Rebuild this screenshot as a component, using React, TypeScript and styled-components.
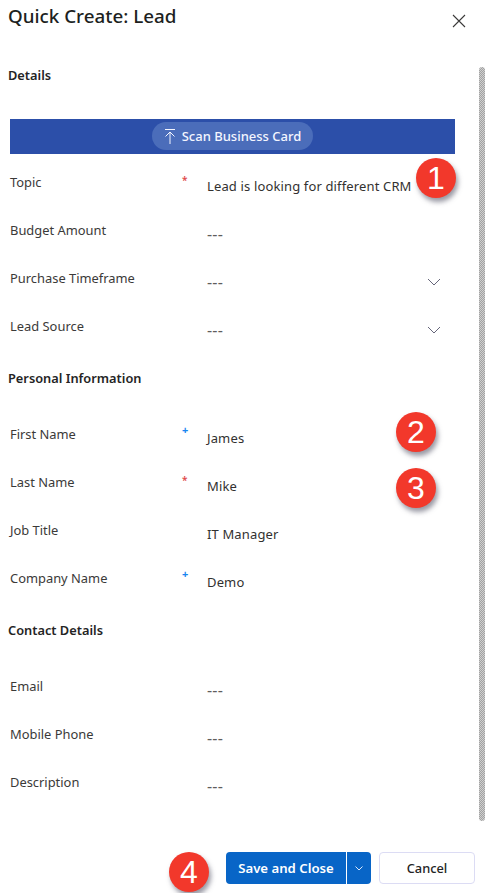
import React from "react";
import styled, { createGlobalStyle } from "styled-components";

const Global = createGlobalStyle`
  html, body { margin: 0; padding: 0; background: #fff; }
  * { box-sizing: border-box; }
  body { font-family: "Noto Sans", "Open Sans", Arial, sans-serif; color: #323130; overflow: hidden; }
`;

const Page = styled.div`
  width: 487px;
  height: 893px;
  display: flex;
  flex-direction: column;
  position: relative;
  overflow: hidden;
`;

const Header = styled.header`
  height: 60px;
  display: flex;
  justify-content: space-between;
  align-items: flex-start;
  padding: 0 21px 0 8px;
`;

const Title = styled.h1`
  margin: 0;
  font-size: 18.8px;
  line-height: 32px;
  font-weight: 500;
  color: #201f1e;
`;

const CloseButton = styled.button`
  border: 0;
  background: none;
  padding: 0;
  margin-top: 14px;
  width: 14px;
  height: 14px;
  display: block;
  color: #3b3a39;
`;

const Body = styled.div`
  height: 792px;
  display: flex;
  justify-content: space-between;
`;

const Form = styled.main`
  width: 465px;
`;

const Scrollbar = styled.div`
  width: 6px;
  height: 754px;
  margin: 7px 2px 0 0;
  border-radius: 3px;
  background: conic-gradient(#a2a2a2 25%, #cfcfcf 0 50%, #a2a2a2 0 75%, #cfcfcf 0) 0 0 / 2px 2px;
`;

const SectionTitle = styled.h2<{ $top?: number; $bottom?: number }>`
  margin: ${(p) => p.$top ?? 0}px 0 ${(p) => p.$bottom ?? 17}px 8px;
  height: 30px;
  font-size: 12.8px;
  line-height: 30px;
  font-weight: 600;
  color: #242424;
`;

const Band = styled.div`
  height: 35px;
  margin: 29px 0 4px 10px;
  width: 445px;
  background: #2c4fa9;
  display: flex;
  justify-content: center;
  padding-top: 3px;
`;

const ScanPill = styled.button`
  width: 161px;
  height: 28px;
  border: 0;
  border-radius: 14px;
  background: #4b6dba;
  color: #f4f6ff;
  display: flex;
  align-items: center;
  justify-content: center;
  gap: 6px;
  font: 500 13px "Noto Sans", sans-serif;
  padding: 0;
`;

const Row = styled.div`
  height: 48px;
  padding-left: 10px;
  display: grid;
  grid-template-columns: 172px 25px 1fr;
  position: relative;
`;

const Label = styled.label`
  font-size: 12.9px;
  line-height: 48px;
  color: #3b3a39;
`;

const Required = styled.span<{ $kind: "required" | "recommended" }>`
  display: block;
  font-size: ${(p) => (p.$kind === "required" ? 10 : 11)}px;
  line-height: ${(p) => (p.$kind === "required" ? 44 : 40)}px;
  font-weight: ${(p) => (p.$kind === "required" ? 600 : 700)};
  color: ${(p) => (p.$kind === "required" ? "#e0484a" : "#1a86f0")};
`;

const Value = styled.div<{ $empty?: boolean }>`
  font-size: ${(p) => (p.$empty ? 16 : 13)}px;
  line-height: 56px;
  letter-spacing: ${(p) => (p.$empty ? "0.2px" : "0.14px")};
  color: ${(p) => (p.$empty ? "#605e5c" : "#323130")};
  white-space: nowrap;
`;

const Chevron = styled.svg`
  position: absolute;
  left: 427px;
  top: 24px;
  width: 14px;
  height: 9px;
`;

const Badge = styled.div<{ $x: number; $y: number }>`
  position: absolute;
  left: ${(p) => p.$x}px;
  top: ${(p) => p.$y}px;
  width: 40px;
  height: 40px;
  border-radius: 50%;
  background: #f2382b;
  color: #fff;
  font: 400 32px/40px "Liberation Sans", Arial, sans-serif;
  text-align: center;
  box-shadow: 2px 4px 5px rgba(70, 70, 90, 0.55);
`;

const Footer = styled.footer`
  height: 41px;
  display: flex;
  justify-content: flex-end;
  align-items: flex-start;
  gap: 8px;
  padding-right: 12px;
`;

const SplitButton = styled.div`
  display: flex;
  width: 145px;
  height: 32px;
  border-radius: 4px;
  overflow: hidden;
  background: #0865c7;
`;

const SaveButton = styled.button`
  width: 120px;
  border: 0;
  background: none;
  color: #fff;
  padding: 0;
  font: 600 13.2px "Noto Sans", sans-serif;
`;

const CaretButton = styled.button`
  flex: 1;
  border: 0;
  border-left: 1px solid #fff;
  background: none;
  padding: 0;
  display: flex;
  align-items: center;
  justify-content: center;
`;

const CancelButton = styled.button`
  width: 96px;
  height: 32px;
  border: 1px solid #dcdcf4;
  border-radius: 4px;
  background: #fff;
  color: #242424;
  padding: 0;
  font: 500 12.8px "Noto Sans", sans-serif;
`;

type Field = { label: string; value?: string; req?: "required" | "recommended"; select?: boolean; badge?: { n: number; x: number; y: number } };

const details: Field[] = [
  { label: "Topic", value: "Lead is looking for different CRM", req: "required", badge: { n: 1, x: 416, y: 0 } },
  { label: "Budget Amount" },
  { label: "Purchase Timeframe", select: true },
  { label: "Lead Source", select: true },
];
const personal: Field[] = [
  { label: "First Name", value: "James", req: "recommended", badge: { n: 2, x: 396, y: 2 } },
  { label: "Last Name", value: "Mike", req: "required", badge: { n: 3, x: 396, y: 10 } },
  { label: "Job Title", value: "IT Manager" },
  { label: "Company Name", value: "Demo", req: "recommended" },
];
const contact: Field[] = [{ label: "Email" }, { label: "Mobile Phone" }, { label: "Description" }];

const FieldRow = ({ f }: { f: Field }) => (
  <Row>
    <Label>{f.label}</Label>
    <div>{f.req && <Required $kind={f.req}>{f.req === "required" ? "*" : "+"}</Required>}</div>
    <Value $empty={!f.value}>{f.value ?? "---"}</Value>
    {f.select && (
      <Chevron viewBox="0 0 14 9" fill="none" stroke="#66667a" strokeWidth="1">
        <path d="M1 1l6 6 6-6" />
      </Chevron>
    )}
    {f.badge && <Badge $x={f.badge.x} $y={f.badge.y}>{f.badge.n}</Badge>}
  </Row>
);

export default function App() {
  return (
    <Page>
      <Global />
      <Header>
        <Title>Quick Create: Lead</Title>
        <CloseButton aria-label="Close">
          <svg width="14" height="14" viewBox="0 0 14 14" fill="none" stroke="currentColor" strokeWidth="1.1">
            <path d="M1 1l12 12M13 1L1 13" />
          </svg>
        </CloseButton>
      </Header>
      <Body>
        <Form>
          <SectionTitle $bottom={0}>Details</SectionTitle>
          <Band>
            <ScanPill>
              <svg width="12" height="17" viewBox="0 0 12 17" fill="none" stroke="currentColor" strokeWidth="1">
                <path d="M1 1.5h10M6 16V4M1.5 8.5L6 4l4.5 4.5" />
              </svg>
              Scan Business Card
            </ScanPill>
          </Band>
          {details.map((f) => <FieldRow key={f.label} f={f} />)}
          <SectionTitle $top={13}>Personal Information</SectionTitle>
          {personal.map((f) => <FieldRow key={f.label} f={f} />)}
          <SectionTitle $top={13}>Contact Details</SectionTitle>
          {contact.map((f) => <FieldRow key={f.label} f={f} />)}
        </Form>
        <Scrollbar />
      </Body>
      <Footer>
        <Badge $x={169} $y={852}>4</Badge>
        <SplitButton>
          <SaveButton>Save and Close</SaveButton>
          <CaretButton aria-label="More">
            <svg width="8" height="5" viewBox="0 0 8 5" fill="none" stroke="#dce8fa" strokeWidth="1"><path d="M.5.5L4 4 7.5.5" /></svg>
          </CaretButton>
        </SplitButton>
        <CancelButton>Cancel</CancelButton>
      </Footer>
    </Page>
  );
}
